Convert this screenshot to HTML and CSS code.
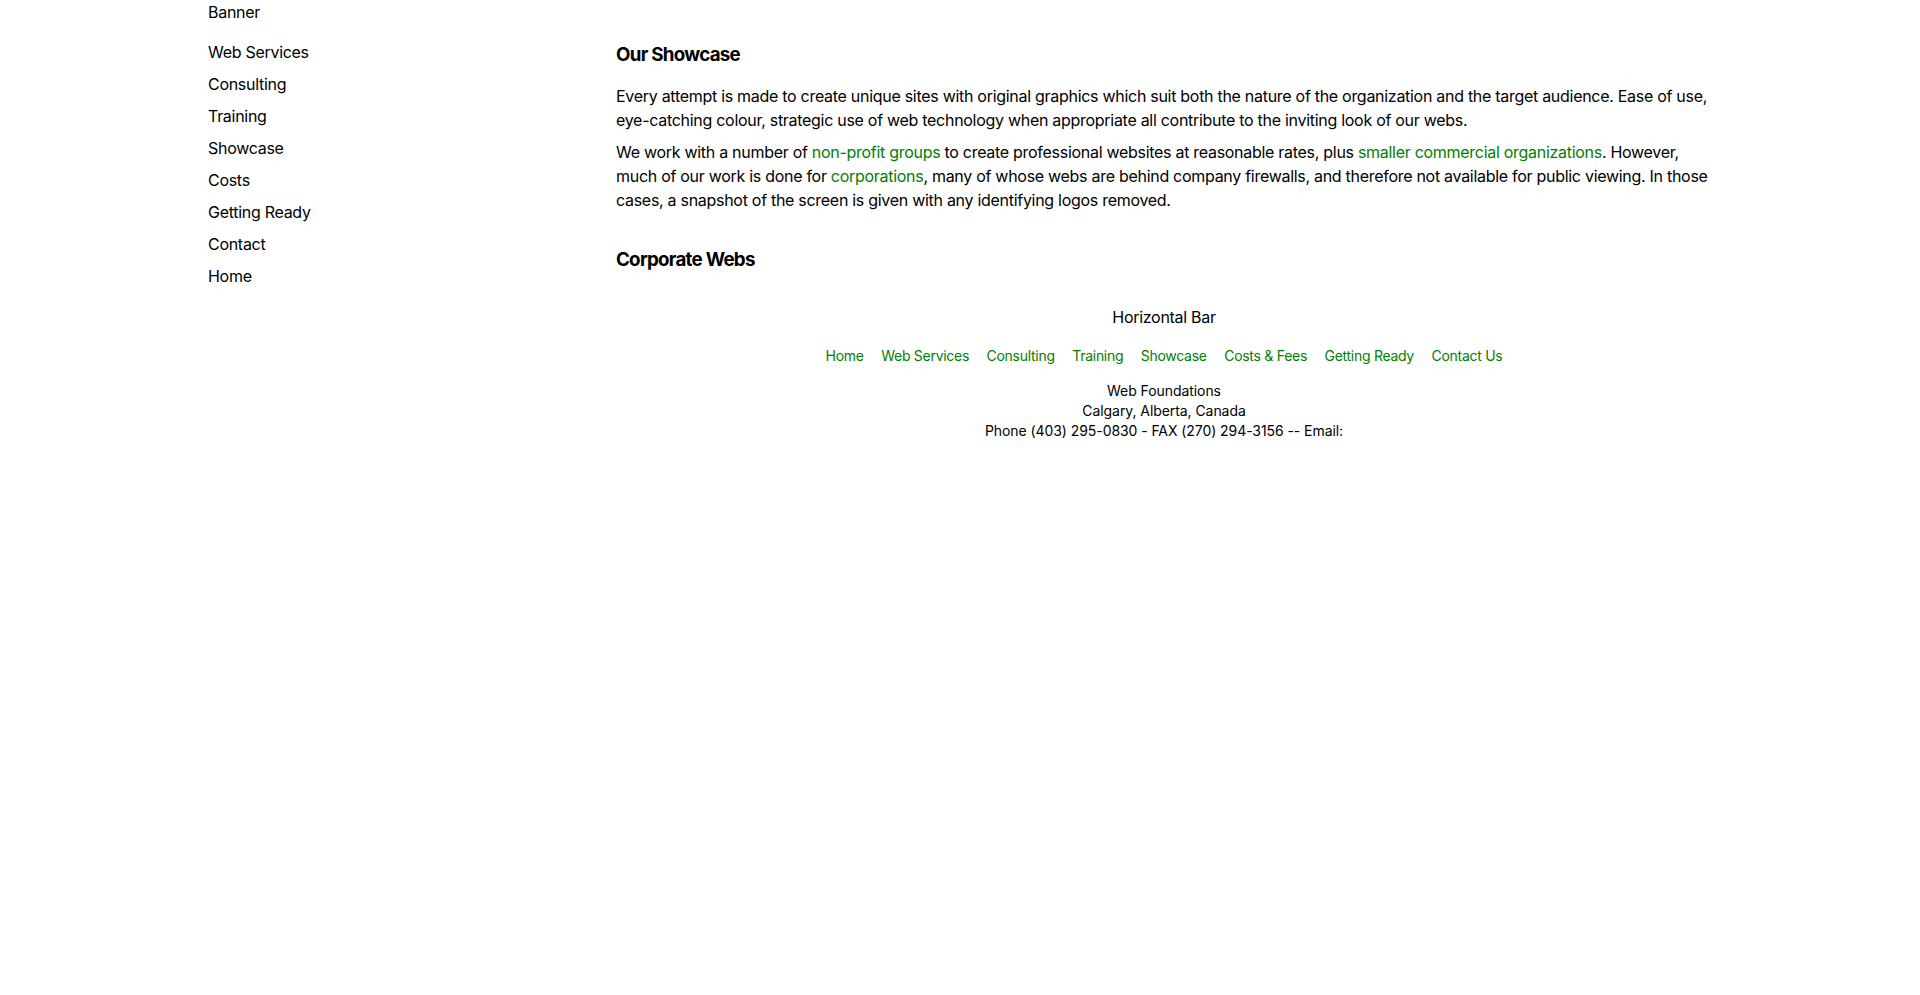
FILE: index.html
```html
<!DOCTYPE html>
<html lang="en">
<head>
<meta charset="utf-8">
<title>Our Showcase - Web Foundations</title>
<link rel="stylesheet" href="styles.css">
</head>
<body>
<div class="page">
  <header class="banner">Banner</header>
  <div class="layout">
    <nav class="side-nav">
      <a href="#">Web Services</a>
      <a href="#">Consulting</a>
      <a href="#">Training</a>
      <a href="#">Showcase</a>
      <a href="#">Costs</a>
      <a href="#">Getting Ready</a>
      <a href="#">Contact</a>
      <a href="#">Home</a>
    </nav>
    <main class="content">
      <section class="section">
        <h3 class="section-title">Our Showcase</h3>
        <p>Every attempt is made to create unique sites with original graphics which suit both the nature of the organization and the target audience. Ease of use, eye-catching colour, strategic use of web technology when appropriate all contribute to the inviting look of our webs.</p>
        <p>We work with a number of <a class="link" href="#">non-profit groups</a> to create professional websites at reasonable rates, plus <a class="link" href="#">smaller commercial organizations</a>. However, much of our work is done for <a class="link" href="#">corporations</a>, many of whose webs are behind company firewalls, and therefore not available for public viewing. In those cases, a snapshot of the screen is given with any identifying logos removed.</p>
      </section>
      <section class="section">
        <h3 class="section-title">Corporate Webs</h3>
      </section>
      <footer class="footer">
        <div class="hbar">Horizontal Bar</div>
        <nav class="foot-nav">
          <a class="link" href="#">Home</a>
          <a class="link" href="#">Web Services</a>
          <a class="link" href="#">Consulting</a>
          <a class="link" href="#">Training</a>
          <a class="link" href="#">Showcase</a>
          <a class="link" href="#">Costs &amp; Fees</a>
          <a class="link" href="#">Getting Ready</a>
          <a class="link" href="#">Contact Us</a>
        </nav>
        <address class="address">
          Web Foundations<br>
          Calgary, Alberta, Canada<br>
          Phone (403) 295-0830 - FAX (270) 294-3156 -- Email:
        </address>
      </footer>
    </main>
  </div>
</div>
</body>
</html>
```
FILE: styles.css
```css
html, body {
  margin: 0;
  padding: 0;
  background: #ffffff;
}

body {
  font-family: Inter, "Liberation Sans", Arial, sans-serif;
  font-size: 16px;
  line-height: 24px;
  letter-spacing: -0.018em;
  color: #000000;
}

.page {
  width: 1504px;
  margin: 0 auto;
}

.banner {
  line-height: 24px;
}

.layout {
  display: grid;
  grid-template-columns: 376px 1096px;
  column-gap: 32px;
  padding-top: 16px;
}

.side-nav {
  display: flex;
  flex-direction: column;
  gap: 8px;
}

.side-nav a {
  color: #000000;
  text-decoration: none;
  line-height: 24px;
}

.content {
  min-width: 0;
}

.section-title {
  margin: 0;
  font-size: 18.72px;
  line-height: 30px;
  font-weight: 700;
  letter-spacing: -0.038em;
}

.section p {
  margin: 8px 0 0;
}

.section .section-title + p {
  margin-top: 14px;
}

.section + .section {
  margin-top: 33px;
}

.link {
  color: #008000;
  text-decoration: none;
}

.footer {
  margin-top: 30px;
  text-align: center;
}

.hbar {
  line-height: 24px;
}

.foot-nav {
  margin-top: 16.5px;
  display: flex;
  justify-content: center;
  gap: 17.5px;
  font-size: 14px;
  line-height: 20px;
  letter-spacing: -0.02em;
}

.address {
  margin-top: 15.5px;
  font-style: normal;
  font-size: 14px;
  line-height: 20px;
  letter-spacing: -0.005em;
}
```
